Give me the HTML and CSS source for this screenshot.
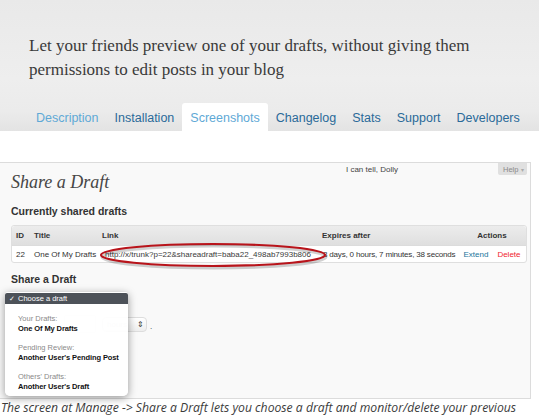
FILE: index.html
```html
<!DOCTYPE html>
<html>
<head>
<meta charset="utf-8">
<link rel="stylesheet" href="styles.css">
</head>
<body>
<header class="head">
  <p class="desc">Let your friends preview one of your drafts, without giving them<br>permissions to edit posts in your blog</p>
  <nav class="tabs">
    <a class="tab light">Description</a>
    <a class="tab">Installation</a>
    <a class="tab light active">Screenshots</a>
    <a class="tab">Changelog</a>
    <a class="tab">Stats</a>
    <a class="tab">Support</a>
    <a class="tab">Developers</a>
  </nav>
</header>
<main class="content">
  <section class="shot">
    <div class="topbar">
      <span class="dolly">I can tell, Dolly</span>
      <span class="help">Help <span class="caret">▾</span></span>
    </div>
    <h1 class="title">Share a Draft</h1>
    <h2 class="sub">Currently shared drafts</h2>
    <table class="drafts">
      <colgroup>
        <col class="c-id"><col class="c-title"><col class="c-link"><col class="c-exp"><col class="c-act">
      </colgroup>
      <thead>
        <tr><th>ID</th><th>Title</th><th>Link</th><th>Expires after</th><th class="center">Actions</th></tr>
      </thead>
      <tbody>
        <tr>
          <td>22</td>
          <td>One Of My Drafts</td>
          <td class="link">http://x/trunk?p=22&amp;shareadraft=baba22_498ab7993b806</td>
          <td class="exp">3 days, 0 hours, 7 minutes, 38 seconds</td>
          <td class="center"><span class="extend">Extend</span><span class="delete">Delete</span></td>
        </tr>
      </tbody>
    </table>
    <h2 class="sub sub2">Share a Draft</h2>
    <div class="form">
      <span class="field"></span>
      <span class="select">hours<span class="spin">&#8661;</span></span>
      <span class="dot">.</span>
    </div>

    <svg class="ring" width="232" height="28" viewBox="0 0 232 28">
      <ellipse cx="115" cy="15" rx="112" ry="11" fill="none" stroke="rgba(0,0,0,0.18)" stroke-width="3"/>
      <ellipse cx="114" cy="13" rx="112" ry="11" fill="none" stroke="#b8141b" stroke-width="2.2"/>
    </svg>

    <div class="menu">
      <div class="chosen"><span class="check">✓</span>Choose a draft</div>
      <div class="group first">
        <div class="label">Your Drafts:</div>
        <div class="item">One Of My Drafts</div>
      </div>
      <div class="group">
        <div class="label">Pending Review:</div>
        <div class="item">Another User's Pending Post</div>
      </div>
      <div class="group">
        <div class="label">Others' Drafts:</div>
        <div class="item">Another User's Draft</div>
      </div>
    </div>
  </section>
  <p class="caption">The screen at Manage -&gt; Share a Draft lets you choose a draft and monitor/delete your previous</p>
</main>
</body>
</html>
```
FILE: styles.css
```css
html, body {
  margin: 0;
  padding: 0;
  background: #fff;
}
body {
  width: 539px;
  height: 418px;
  overflow: hidden;
}
.head {
  height: 131px;
  box-sizing: border-box;
  background: linear-gradient(#e9e9e9, #eeeeee 60%, #ebebeb 85%, #e3e3e3);
  padding: 34px 0 0 28px;
  display: flex;
  flex-direction: column;
  justify-content: space-between;
}
.desc {
  margin: 0 0 0 1px;
  font-family: "Liberation Serif", serif;
  font-size: 17px;
  line-height: 24px;
  color: #3a3a3a;
}
.tabs {
  display: flex;
  height: 28px;
  align-items: stretch;
}
.tab {
  font-family: "Liberation Sans", Arial, sans-serif;
  font-size: 12.5px;
  color: #2a6a99;
  padding: 8px 8px 0;
  box-sizing: border-box;
}
.tab.light {
  color: #5fa9d6;
}
.tab.active {
  background: #fff;
  border-radius: 3px 3px 0 0;
}
.content {
  padding-top: 31px;
}
.shot {
  position: relative;
  height: 237px;
  box-sizing: border-box;
  width: 531px;
  background: #f9f9f9;
  border-top: 1px solid #dcdcdc;
  border-right: 1px solid #dcdcdc;
  border-bottom: 1px solid #dcdcdc;
  padding: 0 3px 0 11px;
  font-family: "Liberation Sans", Arial, sans-serif;
  color: #333;
}
.topbar {
  display: flex;
  justify-content: flex-end;
  align-items: flex-start;
  height: 11px;
}
.dolly {
  font-size: 8px;
  margin-top: 2px;
  margin-right: 100px;
  color: #444;
}
.help {
  width: 29px;
  height: 12px;
  box-sizing: border-box;
  background: #e0e0e0;
  border-radius: 0 0 2px 2px;
  font-size: 7.5px;
  color: #8a8a8a;
  padding: 2px 0 0 5px;
}
.caret {
  font-size: 6px;
  color: #aaa;
}
.title {
  margin: 0;
  font-family: "Liberation Serif", serif;
  font-style: italic;
  font-weight: normal;
  font-size: 18px;
  line-height: 16px;
  color: #464646;
}
.sub {
  margin: 15px 0 0;
  font-size: 10.5px;
  line-height: 12px;
  font-weight: bold;
  color: #333;
}
.sub2 {
  margin-top: 10px;
}
.drafts {
  margin-top: 8px;
  width: 516px;
  table-layout: fixed;
  border-collapse: separate;
  border-spacing: 0;
  border: 1px solid #dfdfdf;
  border-radius: 3px;
  background: #fff;
  font-size: 8px;
}
.c-id { width: 18px; }
.c-title { width: 68px; }
.c-link { width: 220px; }
.c-exp { width: 140px; }
.c-act { width: 68px; }
.drafts th {
  height: 19px;
  padding: 0 0 0 4px;
  text-align: left;
  font-weight: bold;
  color: #333;
  background: linear-gradient(#ececec, #dfdfdf);
  border-bottom: 1px solid #dcdcdc;
}
.drafts th:first-child { border-radius: 3px 0 0 0; }
.drafts th:last-child { border-radius: 0 3px 0 0; }
.drafts th.center, .drafts td.center { text-align: center; padding-left: 0; }
.drafts td {
  height: 16px;
  padding: 0 0 0 4px;
  white-space: nowrap;
  overflow: visible;
  color: #333;
}
.drafts td.link { padding-left: 7px; color: #3a3a3a; }
.drafts td.exp { letter-spacing: -0.18px; padding-left: 5px; }
.extend { color: #21759b; margin-right: 9px; }
.delete { color: #f0252e; }
.form {
  display: flex;
  align-items: center;
  margin-top: 30px;
  padding-left: 53px;
  gap: 6px;
  font-size: 8px;
}
.field {
  width: 30px;
  height: 16px;
  border: 1px solid #e2e2e2;
  background: #fff;
  border-radius: 2px;
}
.select {
  width: 45px;
  height: 15px;
  box-sizing: border-box;
  border: 1px solid #ddd;
  border-radius: 4px;
  background: linear-gradient(#fff, #eee);
  color: #ccc;
  display: flex;
  justify-content: space-between;
  align-items: center;
  padding: 0 2px 0 4px;
}
.spin {
  color: #333;
  font-size: 8px;
}
.dot {
  color: #333;
  margin-left: -3px;
  margin-top: 4px;
}
.ring {
  position: absolute;
  left: 99px;
  top: 79px;
}
.menu {
  position: absolute;
  left: 5px;
  top: 129px;
  width: 123px;
  height: 104px;
  background: rgba(255, 255, 255, 0.94);
  border-radius: 3px 3px 5px 5px;
  box-shadow: 0 2px 8px rgba(0, 0, 0, 0.4);
  font-size: 7.5px;
}
.chosen {
  margin-top: 1px;
  height: 11px;
  line-height: 11px;
  background: #4d5259;
  color: #fff;
  padding-left: 4px;
  border-radius: 2px 2px 0 0;
}
.check {
  display: inline-block;
  width: 9px;
  font-size: 7px;
}
.group {
  padding: 9px 0 0 13px;
}
.group.first {
  padding-top: 10px;
}
.label {
  color: #8a8a8a;
  line-height: 10px;
}
.item {
  color: #111;
  font-weight: bold;
  line-height: 10px;
  letter-spacing: -0.1px;
}
.caption {
  margin: 0 0 0 1px;
  font-family: "Open Sans", sans-serif;
  font-style: italic;
  font-size: 12.2px;
  line-height: 18px;
  color: #3b3b3b;
  white-space: nowrap;
}
```
